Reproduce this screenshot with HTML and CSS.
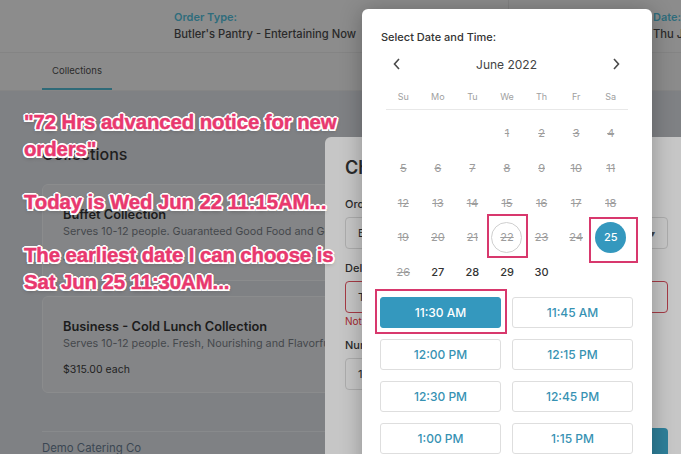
FILE: index.html
```html
<!DOCTYPE html>
<html>
<head>
    <meta charset="utf-8">
    <link rel="stylesheet" href="styles.css">
</head>
<body>
    <div class="page">
        <header class="orderBar">
            <div class="orderInfo orderType">
                <span class="infoLabel">Order Type:</span>
                <span class="infoValue">Butler's Pantry - Entertaining Now</span>
            </div>
            <div class="orderInfo orderDate">
                <span class="infoLabel">Date:</span>
                <span class="infoValue">Thu Jun 23, 2022</span>
            </div>
        </header>

        <nav class="tabs">
            <span class="tab active">Collections</span>
        </nav>

        <main class="content">
            <h2 class="sectionTitle">Collections</h2>

            <div class="card">
                <div class="cardTitle">Buffet Collection</div>
                <div class="cardText">Serves 10-12 people. Guaranteed Good Food and Good Times.</div>
                <div class="cardPrice">$295.00 each</div>
            </div>

            <div class="card">
                <div class="cardTitle">Business - Cold Lunch Collection</div>
                <div class="cardText">Serves 10-12 people. Fresh, Nourishing and Flavorful.</div>
                <div class="cardPrice">$315.00 each</div>
            </div>

            <footer class="footer">Demo Catering Co</footer>
        </main>
    </div>

    <!-- dialog behind the date picker -->
    <div class="dialog">
        <h3 class="dialogTitle">Choose Collection</h3>

        <label class="fieldLabel">Order Type</label>
        <div class="field select">
            <span>Butler's Pantry</span>
            <span class="caret">&#9662;</span>
        </div>

        <label class="fieldLabel">Delivery Date</label>
        <div class="field invalid"><span>Thu Jun 23, 2022</span></div>
        <div class="fieldError">Not available</div>

        <label class="fieldLabel">Number of Items</label>
        <div class="field qty"><span>1</span></div>

        <div class="dialogActions">
            <button class="saveButton">Save</button>
        </div>
    </div>

    <!-- date picker popup -->
    <div class="picker">
        <div class="pickerTitle">Select Date and Time:</div>

        <div class="monthNav">
            <svg width="8" height="12" viewBox="0 0 8 12"><polyline points="6,1 1.5,6 6,11" fill="none" stroke="#4a4a4a" stroke-width="1.6"/></svg>
            <span class="monthName">June 2022</span>
            <svg width="8" height="12" viewBox="0 0 8 12"><polyline points="2,1 6.5,6 2,11" fill="none" stroke="#4a4a4a" stroke-width="1.6"/></svg>
        </div>

        <div class="weekdays">
            <span>Su</span><span>Mo</span><span>Tu</span><span>We</span><span>Th</span><span>Fr</span><span>Sa</span>
        </div>

        <div class="days">
            <span></span><span></span><span></span>
            <span class="day off">1</span><span class="day off">2</span><span class="day off">3</span><span class="day off">4</span>
            <span class="day off">5</span><span class="day off">6</span><span class="day off">7</span><span class="day off">8</span><span class="day off">9</span><span class="day off">10</span><span class="day off">11</span>
            <span class="day off">12</span><span class="day off">13</span><span class="day off">14</span><span class="day off">15</span><span class="day off">16</span><span class="day off">17</span><span class="day off">18</span>
            <span class="day off">19</span><span class="day off">20</span><span class="day off">21</span><span class="day off today">22</span><span class="day off">23</span><span class="day off">24</span><span class="day selected">25</span>
            <span class="day off">26</span><span class="day">27</span><span class="day">28</span><span class="day">29</span><span class="day">30</span>
        </div>

        <div class="times">
            <button class="time selected">11:30 AM</button>
            <button class="time">11:45 AM</button>
            <button class="time">12:00 PM</button>
            <button class="time">12:15 PM</button>
            <button class="time">12:30 PM</button>
            <button class="time">12:45 PM</button>
            <button class="time">1:00 PM</button>
            <button class="time">1:15 PM</button>
        </div>
    </div>

    <!-- screenshot annotations -->
    <div class="note">
        <p>"72 Hrs advanced notice for new orders"</p>
        <p>Today is Wed Jun 22 11:15AM...</p>
        <p>The earliest date I can choose is Sat Jun 25 11:30AM...</p>
    </div>
    <div class="mark markToday"></div>
    <div class="mark markDay"></div>
    <div class="mark markTime"></div>
</body>
</html>
```

FILE: styles.css
```css
body {
    margin: 0;
    width: 681px;
    height: 454px;
    overflow: hidden;
    position: relative;
    font-family: Inter, "Liberation Sans", sans-serif;
    background: #7f8184;
}

/* background page (dimmed) */
.orderBar {
    display: flex;
    height: 52px;
    background: #8c8c8c;
    border-bottom: 1px solid #848484;
}

.orderInfo {
    display: flex;
    flex-direction: column;
    flex-shrink: 0;
    padding-top: 10px;
    white-space: nowrap;
}

.orderType {
    margin-left: 174px;
    width: 334px;
    border-right: 1px solid #828282;
}

.orderDate {
    padding-left: 144px;
}

.infoLabel {
    font-size: 11px;
    line-height: 15px;
    font-weight: 600;
    color: #2f6c7c;
}

.infoValue {
    margin-top: 2px;
    font-size: 11.2px;
    line-height: 15px;
    font-weight: 500;
    color: #2a2a2a;
}

.tabs {
    display: flex;
    height: 37px;
    padding-left: 42px;
    background: #8b8b8b;
    border-bottom: 1px solid #858585;
}

.tab {
    display: flex;
    align-items: center;
    padding: 0 10px;
    font-size: 9.5px;
    color: #2c2c2c;
}

.tab.active {
    border-bottom: 2px solid #2f6a78;
}

.content {
    padding: 0 42px;
}

.sectionTitle {
    margin: 53px 0 20px;
    font-size: 16px;
    line-height: 20px;
    font-weight: 500;
    color: #1e1e1e;
}

.card {
    margin-bottom: 15px;
    padding: 22px 20px 15px;
    background: #848587;
    border: 1px solid #8b8c8d;
    border-radius: 6px;
    white-space: nowrap;
}

.cardTitle {
    font-size: 12.8px;
    line-height: 16px;
    font-weight: 600;
    color: #1c1c1c;
}

.cardText {
    margin-top: 2px;
    font-size: 10.8px;
    line-height: 14px;
    color: #45484c;
}

.cardPrice {
    margin-top: 11px;
    font-size: 10.5px;
    line-height: 15px;
    color: #222;
}

.footer {
    margin-top: 38px;
    padding-top: 9px;
    border-top: 1px solid #888a8c;
    font-size: 11.4px;
    line-height: 15px;
    color: #3b4753;
}

/* dialog under the picker */
.dialog {
    position: absolute;
    left: 325px;
    top: 137px;
    width: 323px;
    height: 330px;
    padding: 20px;
    background: #c6c6c6;
    border-radius: 6px;
    color: #2a2a2a;
}

.dialogTitle {
    margin: 0 0 18px;
    font-size: 18px;
    line-height: 22px;
    font-weight: 600;
}

.fieldLabel {
    display: block;
    font-size: 11px;
    line-height: 14px;
    font-weight: 500;
}

.field {
    display: flex;
    align-items: center;
    justify-content: space-between;
    box-sizing: border-box;
    height: 32px;
    margin: 6px 0 12px;
    padding: 0 12px;
    border: 1px solid #acacac;
    border-radius: 4px;
    font-size: 11px;
}

.caret {
    font-size: 10px;
    color: #444;
}

.field.invalid {
    margin-bottom: 2px;
    border-color: #a53a45;
}

.fieldError {
    margin-bottom: 11px;
    font-size: 10px;
    line-height: 12px;
    color: #a3262f;
}

.field.qty {
    width: 120px;
}

.dialogActions {
    display: flex;
    justify-content: flex-end;
    margin-top: 38px;
}

.saveButton {
    height: 34px;
    padding: 0 16px;
    border: none;
    border-radius: 4px;
    background: #2e7f99;
    color: #c8d8de;
    font-family: inherit;
    font-size: 12px;
}

/* date picker */
.picker {
    position: absolute;
    left: 362px;
    top: 9px;
    width: 253px;
    height: 470px;
    padding: 21px 19px 0 18px;
    background: #fff;
    border-radius: 6px;
    box-shadow: 0 2px 22px rgba(0, 0, 0, 0.28);
}

.pickerTitle {
    padding-left: 1px;
    font-size: 11px;
    line-height: 14px;
    font-weight: 500;
    color: #333;
}

.monthNav {
    display: flex;
    align-items: center;
    justify-content: space-between;
    height: 24px;
    margin-top: 8px;
    padding: 0 13px;
}

.monthName {
    font-size: 12px;
    color: #444;
}

.weekdays,
.days {
    display: grid;
    grid-template-columns: repeat(7, 1fr);
    margin: 0 5px 0 6px;
}

.weekdays {
    height: 25px;
    margin-top: 8px;
    align-items: center;
    border-bottom: 1px solid #e8e8e8;
    font-size: 9px;
    color: #a0a0a0;
    text-align: center;
}

.days {
    grid-auto-rows: 34.7px;
    margin-top: 6px;
    justify-items: center;
    align-items: center;
}

.day {
    display: flex;
    align-items: center;
    justify-content: center;
    width: 31px;
    height: 31px;
    border-radius: 50%;
    box-sizing: border-box;
    font-size: 11px;
    font-weight: 500;
    color: #333;
}

.day.off {
    color: #9d9d9d;
    font-weight: 400;
    text-decoration: line-through;
}

.day.today {
    border: 1px solid #cfcfcf;
}

.day.selected {
    background: #3498be;
    color: #fff;
}

.times {
    display: grid;
    grid-template-columns: 1fr 1fr;
    gap: 11px;
    grid-auto-rows: 31px;
    margin-top: 8px;
}

.time {
    border: 1px solid #dedede;
    border-radius: 3px;
    background: #fff;
    color: #3792b3;
    font-family: inherit;
    font-size: 12px;
    font-weight: 500;
}

.time.selected {
    background: #3498be;
    border-color: #3498be;
    color: #fff;
}

/* annotations drawn over the screenshot */
.note {
    position: absolute;
    left: 24px;
    top: 109px;
    width: 336px;
    font-family: "Liberation Sans", Arial, sans-serif;
    font-size: 20.4px;
    line-height: 26.7px;
    font-weight: bold;
    letter-spacing: -0.1px;
    color: #e8386e;
    -webkit-text-stroke: 0.5px #e8386e;
    text-shadow: -2px 0 #fff, 2px 0 #fff, 0 -2px #fff, 0 2px #fff,
        -1.5px -1.5px #fff, 1.5px -1.5px #fff, -1.5px 1.5px #fff, 1.5px 1.5px #fff,
        0 2px 4px rgba(0, 0, 0, 0.35);
}

.note p {
    margin: 0 0 26.7px;
}

.mark {
    position: absolute;
    border: 2px solid #d8386d;
}

.markToday {
    left: 487px;
    top: 214px;
    width: 37px;
    height: 40px;
}

.markDay {
    left: 589px;
    top: 217px;
    width: 45px;
    height: 42px;
}

.markTime {
    left: 375px;
    top: 289px;
    width: 128px;
    height: 41px;
}
```
